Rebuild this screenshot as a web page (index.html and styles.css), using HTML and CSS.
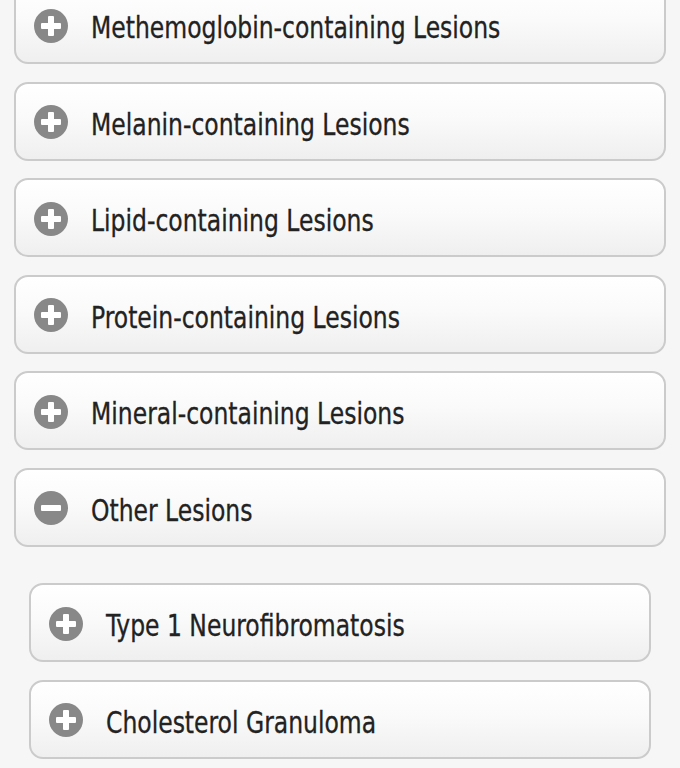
FILE: index.html
```html
<!DOCTYPE html>
<html>
<head>
<meta charset="utf-8">
<link rel="stylesheet" href="styles.css">
</head>
<body>
<div class="list">
  <div class="item"><span class="icon plus"></span><span class="label">Methemoglobin-containing Lesions</span></div>
  <div class="item"><span class="icon plus"></span><span class="label">Melanin-containing Lesions</span></div>
  <div class="item"><span class="icon plus"></span><span class="label">Lipid-containing Lesions</span></div>
  <div class="item"><span class="icon plus"></span><span class="label">Protein-containing Lesions</span></div>
  <div class="item"><span class="icon plus"></span><span class="label">Mineral-containing Lesions</span></div>
  <div class="item"><span class="icon minus"></span><span class="label">Other Lesions</span></div>
  <div class="sub">
    <div class="item"><span class="icon plus"></span><span class="label">Type 1 Neurofibromatosis</span></div>
    <div class="item"><span class="icon plus"></span><span class="label">Cholesterol Granuloma</span></div>
  </div>
</div>
</body>
</html>
```
FILE: styles.css
```css
html, body {
  margin: 0;
  padding: 0;
  background: #f6f6f6;
}
body {
  overflow: hidden;
  height: 768px;
}
.list {
  display: flex;
  flex-direction: column;
  gap: 17.5px;
  margin-top: -15px;
  padding: 0 14px;
}
.item {
  box-sizing: border-box;
  height: 79px;
  display: flex;
  align-items: center;
  padding: 2px 0 0 18px;
  border: 2px solid #cbcbcb;
  border-radius: 14px;
  background: linear-gradient(to bottom, #ffffff 0%, #fafafa 45%, #efefef 100%);
}
.icon {
  flex: none;
  position: relative;
  width: 34px;
  height: 34px;
  border-radius: 50%;
  background: #888888;
  margin-right: 23px;
}
.icon::before, .icon::after {
  content: "";
  position: absolute;
  background: #ffffff;
  border-radius: 1px;
}
.icon::before {
  left: 7px;
  top: 14px;
  width: 20px;
  height: 6px;
}
.plus::after {
  left: 14px;
  top: 7px;
  width: 6px;
  height: 20px;
}
.label {
  display: inline-block;
  font-family: "DejaVu Sans Condensed", "DejaVu Sans", sans-serif;
  font-size: 30px;
  color: #222222;
  white-space: nowrap;
  transform: scaleX(0.87);
  transform-origin: left center;
  -webkit-text-stroke: 0.3px #222222;
  padding-top: 4px;
}
.sub {
  display: flex;
  flex-direction: column;
  gap: 17.5px;
  padding: 19px 15px 0 15px;
}
```
